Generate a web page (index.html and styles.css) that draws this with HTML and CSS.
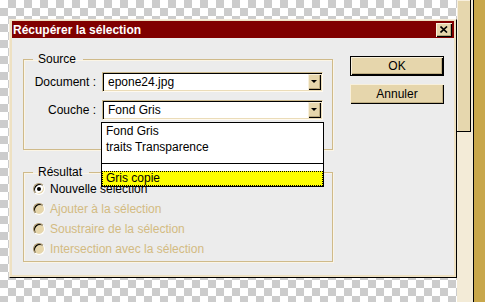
FILE: index.html
```html
<!DOCTYPE html>
<html lang="fr">

<head>
    <meta charset="UTF-8">
    <title>Récupérer la sélection</title>
    <link rel="stylesheet" href="styles.css">
</head>

<body>
    <div class="canvas">
        <div class="dialog">
            <div class="titlebar">
                <span class="title">Récupérer la sélection</span>
                <span class="close">
                    <svg width="8" height="7" viewBox="0 0 8 7"><path d="M0.5 0.5L7 6.5M7 0.5L0.5 6.5" stroke="#000" stroke-width="1.6" fill="none"/></svg>
                </span>
            </div>
            <div class="dialog-body">
                <div class="groups">
                    <fieldset class="group source">
                        <legend>Source</legend>
                        <div class="field-row">
                            <label>Document :</label>
                            <div class="combo">
                                <span class="combo-value">epone24.jpg</span>
                                <span class="combo-arrow"></span>
                            </div>
                        </div>
                        <div class="field-row">
                            <label>Couche :</label>
                            <div class="combo">
                                <span class="combo-value">Fond Gris</span>
                                <span class="combo-arrow"></span>
                                <div class="dropdown">
                                    <div class="option">Fond Gris</div>
                                    <div class="option">traits Transparence</div>
                                    <div class="option-gap"></div>
                                    <div class="option-sep"></div>
                                    <div class="option selected">Gris copie</div>
                                </div>
                            </div>
                        </div>
                    </fieldset>
                    <fieldset class="group result">
                        <legend>Résultat</legend>
                        <div class="radio-row checked"><span class="radio"></span>Nouvelle sélection</div>
                        <div class="radio-row disabled"><span class="radio"></span>Ajouter à la sélection</div>
                        <div class="radio-row disabled"><span class="radio"></span>Soustraire de la sélection</div>
                        <div class="radio-row disabled"><span class="radio"></span>Intersection avec la sélection</div>
                    </fieldset>
                </div>
                <div class="buttons">
                    <button class="btn default">OK</button>
                    <button class="btn">Annuler</button>
                </div>
            </div>
        </div>
    </div>
    <div class="scroll">
        <div class="thumb"></div>
    </div>
    <div class="rail"></div>
</body>

</html>
```

FILE: styles.css
```css
html,
body {
    height: 100%;
    margin: 0;
    padding: 0;
}

body {
    display: flex;
    overflow: hidden;
    font-family: 'Liberation Sans', Arial, sans-serif;
    font-size: 12px;
    color: #000;
}

.canvas {
    width: 457px;
    flex: none;
    box-sizing: border-box;
    padding: 19px 0 0 9px;
    background-color: #fff;
    background-image: conic-gradient(#cccccc 25%, #fff 0 50%, #cccccc 0 75%, #fff 0);
    background-size: 16px 16px;
}

.dialog {
    width: 448px;
    height: 259px;
    box-sizing: border-box;
    border: 1px solid;
    border-color: #f6eddb #000 #000 #f6eddb;
    padding: 1px 2px 2px 2px;
    background: #eee1c2;
    display: flex;
    flex-direction: column;
}

.titlebar {
    height: 17px;
    flex: none;
    background: #800000;
    color: #fff;
    font-weight: bold;
    display: flex;
    align-items: center;
    justify-content: space-between;
    padding: 0 2px 0 1px;
}

.close {
    width: 16px;
    height: 14px;
    box-sizing: border-box;
    background: #e6d6ac;
    box-shadow: inset 1px 1px #f8f0dc, inset -1px -1px #000, inset -2px -2px #b9a77b;
    display: flex;
    align-items: center;
    justify-content: center;
}

.close svg {
    display: block;
    margin: 0 1px 1px 0;
}

.dialog-body {
    flex: 1;
    background: #ececec;
    display: flex;
    padding: 14px 10px 0 11px;
}

.groups {
    width: 310px;
    flex: none;
}

.group {
    margin: 0;
    width: 310px;
    box-sizing: border-box;
    border: 1px solid #cfba8a;
    box-shadow: 1px 1px 0 #fbf5e6, inset 1px 1px 0 #fbf5e6;
    padding: 6px 9px 29px 9px;
}

.group legend {
    padding: 0 7px 0 5px;
    line-height: 14px;
}

.field-row {
    display: flex;
    align-items: center;
    gap: 6px;
}

.field-row + .field-row {
    margin-top: 8px;
}

.field-row label {
    width: 63px;
    text-align: right;
    white-space: nowrap;
}

.combo {
    position: relative;
    flex: 1;
    height: 20px;
    box-sizing: border-box;
    border: 1px solid;
    border-color: #cbb98d #fffaf0 #fffaf0 #cbb98d;
    box-shadow: inset 1px 1px #000, inset -1px -1px #ebdcb8;
    background: #fff;
    display: flex;
    align-items: center;
    padding: 1px 1px 1px 5px;
}

.combo-value {
    flex: 1;
}

.combo-arrow {
    width: 13px;
    height: 16px;
    box-sizing: border-box;
    background: #e6d6ac;
    box-shadow: inset 1px 1px #f8f0dc, inset -1px -1px #000, inset -2px -2px #b9a77b;
    display: flex;
    align-items: center;
    justify-content: center;
}

.combo-arrow::after {
    content: "";
    width: 0;
    height: 0;
    border-left: 3px solid transparent;
    border-right: 3px solid transparent;
    border-top: 3px solid #000;
    margin: 0 1px 1px 0;
}

.dropdown {
    position: absolute;
    top: calc(100% + 3px);
    left: -2px;
    right: -2px;
    z-index: 2;
    border: 1px solid #000;
    background: #fff;
}

.option {
    height: 16px;
    line-height: 16px;
    padding-left: 4px;
}

.option-gap {
    height: 8px;
}

.option-sep {
    height: 1px;
    background: #000;
    margin-bottom: 7px;
}

.option.selected {
    height: 15px;
    line-height: 13px;
    box-sizing: border-box;
    padding-left: 3px;
    background: #ffff00;
    border: 1px dotted #000;
}

.group.result {
    margin-top: 15px;
    padding: 0 9px 2px 9px;
}

.radio-row {
    height: 20px;
    display: flex;
    align-items: center;
    gap: 5px;
    white-space: nowrap;
}

.radio {
    position: relative;
    width: 12px;
    height: 12px;
    box-sizing: border-box;
    border-radius: 50%;
    border: 1px solid;
    border-color: #a8946a #fff #fff #a8946a;
    box-shadow: inset 1px 1px #000, inset -1px -1px #e6d6ac;
    background: #fff;
}

.radio-row.checked .radio::after {
    content: "";
    position: absolute;
    left: 3px;
    top: 3px;
    width: 4px;
    height: 4px;
    border-radius: 50%;
    background: #000;
}

.radio-row.disabled {
    color: #d3bb82;
}

.radio-row.disabled .radio {
    background: #e6d6ac;
}

.buttons {
    margin-left: 17px;
    padding-top: 4px;
    display: flex;
    flex-direction: column;
    gap: 8px;
}

.btn {
    width: 94px;
    height: 20px;
    box-sizing: border-box;
    margin: 0;
    padding: 0;
    border: none;
    background: #e6d6ac;
    box-shadow: inset 1px 1px #f8f0dc, inset -1px -1px #000, inset -2px -2px #bfae82;
    font-family: inherit;
    font-size: 12px;
    color: #000;
}

.btn.default {
    border: 1px solid #000;
}

.scroll {
    width: 17px;
    flex: none;
    box-sizing: border-box;
    background: #f3ebd7;
    border-right: 1px solid #000;
}

.thumb {
    width: 14px;
    height: 132px;
    box-sizing: border-box;
    background: #e6d7ae;
    border-right: 1px solid #000;
    border-bottom: 1px solid #000;
    box-shadow: inset 1px 1px #f8f0de;
}

.rail {
    flex: 1;
    background: #c8a74b;
}
```
